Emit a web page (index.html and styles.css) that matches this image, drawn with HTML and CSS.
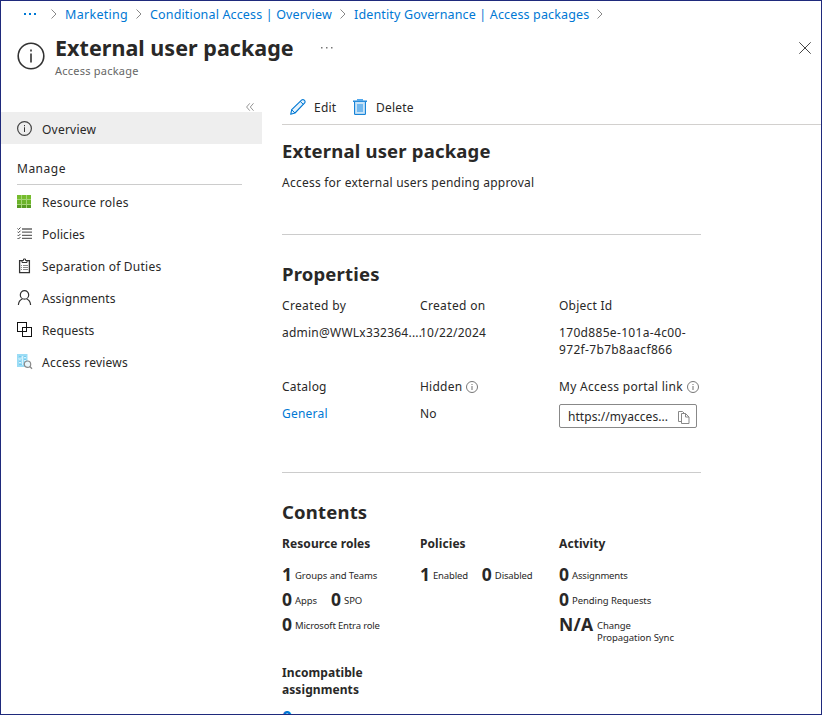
FILE: index.html
```html
<!DOCTYPE html>
<html lang="en">
<head>
<meta charset="utf-8">
<title>External user package</title>
<link rel="stylesheet" href="styles.css">
</head>
<body>
<div class="window">
  <nav class="crumbs">
    <a class="crumb more"><svg width="14" height="4" viewBox="0 0 14 4"><path fill="#0078d4" d="M1 1h2v2H1zM6 1h2v2H6zM11 1h2v2h-2z"/></svg></a>
    <svg class="chev" width="6" height="10" viewBox="0 0 6 10"><path d="M.5.5L5 5 .5 9.500"/></svg>
    <a class="crumb c-marketing">Marketing</a>
    <svg class="chev" width="6" height="10" viewBox="0 0 6 10"><path d="M.5.5L5 5 .5 9.500"/></svg>
    <a class="crumb c-conditional">Conditional Access | Overview</a>
    <svg class="chev" width="6" height="10" viewBox="0 0 6 10"><path d="M.5.5L5 5 .5 9.500"/></svg>
    <a class="crumb c-governance">Identity Governance | Access packages</a>
    <svg class="chev" width="6" height="10" viewBox="0 0 6 10"><path d="M.5.5L5 5 .5 9.500"/></svg>
  </nav>
  <header class="head">
    <svg class="head-icon" width="28" height="28" viewBox="0 0 28 28"><circle cx="14" cy="14" r="12.800" fill="none" stroke="#333" stroke-width="1.600"/><path fill="#333" d="M13.200 7.500h1.600v2h-1.600zM13.200 11.500h1.600v9h-1.600z"/></svg>
    <div class="head-text">
      <div class="title-row"><h1>External user package</h1><svg class="dots" width="12" height="2" viewBox="0 0 12 2"><path fill="#777" d="M0 0h1.500v1.500H0zM5 0h1.500v1.500H5zM10 0h1.500v1.500H10z"/></svg></div>
      <div class="subtitle">Access package</div>
    </div>
    <svg class="close" width="12" height="12" viewBox="0 0 12 12"><path d="M.3.3l11.400 11.400M11.700.3L.3 11.700" stroke="#444" fill="none"/></svg>
  </header>
  <div class="body">
    <aside class="side">
      <div class="collapse"><svg width="8" height="8" viewBox="0 0 8 8"><path d="M3.800.3L.6 4l3.200 3.700M7.500.3L4.300 4l3.200 3.700" fill="none" stroke="#888" stroke-width=".9"/></svg></div>
      <div class="item active"><svg width="16" height="16" viewBox="0 0 16 16"><circle cx="7.500" cy="8.500" r="6.900" fill="none" stroke="#444" stroke-width="1.200"/><path fill="#333" d="M7 5h1v1.200H7zM7 7.300h1V12H7z"/></svg><span class="t-overview">Overview</span></div>
      <div class="group">Manage</div>
      <div class="item"><svg width="16" height="16" viewBox="0 0 16 16"><path fill="#76bc2d" d="M0 1h4v4H0zM5 1h4v4H5zM10 1h4v4h-4z"/><path fill="#6bb32a" d="M0 6h4v4H0zM5 6h4v4H5zM10 6h4v4h-4z"/><path fill="#579a22" d="M0 11h4v3H0zM5 11h4v3H5zM10 11h4v3h-4z"/><path fill="none" stroke="#a5d577" d="M4.500 1v13M9.500 1v13M0 5.500h14M0 10.500h14"/></svg><span class="t-roles">Resource roles</span></div>
      <div class="item"><svg width="16" height="16" viewBox="0 0 16 16"><path fill="none" stroke="#666" stroke-width="1.300" d="M5 3h10M5 6.200h10M5 9.400h10M5 12.400h10"/><path fill="none" stroke="#333" stroke-width=".9" d="M.5 2.500l1 1 2-2M.5 5.700l1 1 2-2M.5 8.900l1 1 2-2M.5 12l1 1 2-2"/></svg><span class="t-policies">Policies</span></div>
      <div class="item"><svg width="16" height="16" viewBox="0 0 16 16"><path fill="none" stroke="#333" stroke-width="1.300" d="M2.600 2.600h9.800v12H2.600z"/><path fill="#fff" stroke="#333" d="M5 4.500v-2h1.500V1h2v1.500H10v2z"/><path stroke="#888" d="M6 7.500h5M6 9.500h5M6 11.500h5M4 7.500h1M4 9.500h1M4 11.500h1"/></svg><span class="t-duties">Separation of Duties</span></div>
      <div class="item"><svg width="16" height="16" viewBox="0 0 16 16"><circle cx="7.500" cy="4.900" r="4.200" fill="none" stroke="#333" stroke-width="1.200"/><path fill="none" stroke="#333" stroke-width="1.200" d="M1.400 15c.2-3.300 2-5.300 4-6M13.600 15c-.2-3.300-2-5.300-4-6"/></svg><span class="t-assign">Assignments</span></div>
      <div class="item"><svg width="16" height="16" viewBox="0 0 16 16" shape-rendering="crispEdges"><path fill="none" stroke="#111" d="M5.500 9.500h-5v-9h9v5M5.500 5.500h9v9h-9zM5.500 9.500h4v-4"/></svg><span class="t-requests">Requests</span></div>
      <div class="item"><svg width="16" height="16" viewBox="0 0 16 16"><path fill="#9bdcf5" d="M0 0h10.500v13H0z"/><path fill="#d8f3fd" d="M5 2h1v9H5zM2 4l1 1 2-2v1L3 6 1 5zM7 3h2v1H7zM2 8h2v1H2zM7 6h2v1H7z"/><path fill="#76cbee" d="M2 2h2v1H2zM7 2h2v1H7zM2 7h2v1H2zM2 10h3v1H2zM7 5h2v1H7z"/><circle cx="10.500" cy="10.200" r="3.200" fill="#e8f6fb" stroke="#8a8a8a" stroke-width="1.200"/><path stroke="#888" stroke-width="1.300" d="M12.800 12.500l2.200 2.300"/></svg><span class="t-reviews">Access reviews</span></div>
    </aside>
    <main class="main">
      <div class="toolbar">
        <svg width="16" height="16" viewBox="0 0 16 16"><path fill="#e6f3fc" stroke="#0078d4" stroke-width="1.100" stroke-linejoin="round" d="M.7 15.300l1-4.600L11.800.9q1.200-.8 2.500.3t.4 2.700L5 14z"/><path fill="none" stroke="#0078d4" d="M10.300 2.500l3.200 3M1.700 10.800L5 14"/></svg>
        <span class="t-edit">Edit</span>
        <svg class="trash" width="14" height="16" viewBox="0 0 14 16"><path fill="#50a8ee" d="M4 0h6v1.500H4z"/><path stroke="#0078d4" stroke-width="1.300" d="M0 2.200h14"/><path fill="#c9e4f8" stroke="#0078d4" d="M1.600 3v12.400h10.800V3"/><path fill="#72b8ee" d="M4 5h6v8H4z"/></svg>
        <span class="t-delete">Delete</span>
      </div>
      <div class="content">
        <section class="intro"><h2 class="h-package">External user package</h2><p>Access for external users pending approval</p></section>
        <section class="props">
          <h2 class="h-props">Properties</h2>
          <div class="grid first">
            <div><div class="label t-by">Created by</div><div class="value t-admin">admin@WWLx332364....</div></div>
            <div><div class="label t-on">Created on</div><div class="value t-date">10/22/2024</div></div>
            <div><div class="label t-oid">Object Id</div><div class="value t-id">170d885e-101a-4c00-<br>972f-7b7b8aacf866</div></div>
          </div>
          <div class="grid second">
            <div><div class="label t-catalog">Catalog</div><div class="value"><a class="t-general">General</a></div></div>
            <div><div class="label"><span class="t-hidden">Hidden</span><svg class="info" width="12" height="12" viewBox="0 0 12 12"><circle cx="6" cy="6" r="5.500" fill="none" stroke="#777"/><path fill="#888" d="M5.400 3h1.200v1H5.400zM5.400 5h1.200v4H5.400z"/></svg></div><div class="value t-no">No</div></div>
            <div><div class="label"><span class="t-portal">My Access portal link</span><svg class="info" width="12" height="12" viewBox="0 0 12 12"><circle cx="6" cy="6" r="5.500" fill="none" stroke="#777"/><path fill="#888" d="M5.400 3h1.200v1H5.400zM5.400 5h1.200v4H5.400z"/></svg></div>
              <div class="linkbox"><span class="t-link">https://myacces...</span><svg width="12" height="13" viewBox="0 0 12 13"><path fill="none" stroke="#888" d="M3.500 10.500h-3V.5h4L7 3M3.500 2.500h4l3.500 3.500v6.500H3.500zM7.500 2.500V6H11"/></svg></div></div>
          </div>
        </section>
        <section class="contents">
          <h2 class="h-contents">Contents</h2>
          <div class="grid">
            <div><h3 class="s-roles">Resource roles</h3>
              <div class="stat"><b>1</b><small class="m-groups">Groups and Teams</small></div>
              <div class="stat"><b>0</b><small class="m-apps">Apps</small><b class="next">0</b><small class="m-spo">SPO</small></div>
              <div class="stat"><b>0</b><small class="m-entra">Microsoft Entra role</small></div>
            </div>
            <div><h3 class="s-policies">Policies</h3>
              <div class="stat"><b>1</b><small class="m-enabled">Enabled</small><b class="next">0</b><small class="m-disabled">Disabled</small></div>
            </div>
            <div><h3 class="s-activity">Activity</h3>
              <div class="stat"><b>0</b><small class="m-assign">Assignments</small></div>
              <div class="stat"><b>0</b><small class="m-pending">Pending Requests</small></div>
              <div class="stat"><b class="na">N/A</b><small class="m-change">Change<br>Propagation Sync</small></div>
            </div>
          </div>
          <h3 class="incompatible">Incompatible<br>assignments</h3>
          <div class="stat last"><b>0</b></div>
        </section>
      </div>
    </main>
  </div>
</div>
</body>
</html>
```
FILE: styles.css
```css
* { box-sizing: border-box; }
body { margin: 0; background: #fff; color: #292827; font: 12px/17px "Noto Sans", "Open Sans", sans-serif; letter-spacing: .23px; }
h1, h2, h3, p { margin: 0; }
svg { flex: none; display: block; }
a { color: #0078d4; }
.window { width: 822px; height: 715px; border: 1px solid #1f2a7c; overflow: hidden; white-space: nowrap; }
.crumbs { display: flex; align-items: center; height: 26px; padding-left: 22px; font-size: 12.500px; letter-spacing: .15px; }
.crumb { flex: none; }
.more { width: 28px; }
.crumbs .chev { margin-right: 8px; }
.chev path { fill: none; stroke: #888; }
.c-marketing { width: 71px; letter-spacing: .3px; }
.c-conditional { width: 190px; }
.c-governance { width: 243px; }
.head { display: flex; height: 65px; padding: 5px 10px 0 16px; }
.head-icon { margin-top: 10px; }
.head-text { flex: 1; margin-left: 10px; }
.title-row { display: flex; align-items: center; height: 30px; }
.dots { margin-top: 2px; }
h1 { width: 266px; padding-top: 1px; font-size: 21.500px; font-weight: 700; line-height: 30px; letter-spacing: .03px; }
.subtitle { font-size: 11px; color: #666; line-height: 17px; }
.close { margin-top: 10px; }
.body { display: flex; height: 622px; }
.side { width: 261px; flex: none; }
.collapse { height: 20px; padding: 11px 0 0 245px; }
.item { display: flex; align-items: center; height: 32px; padding-left: 16px; gap: 9px; }
.active { background: #eee; }
.active svg { margin-top: -1px; }
.active span { padding-top: 2px; }
.t-roles { letter-spacing: .3px; }
.t-policies, .t-assign, .t-requests { letter-spacing: .1px; }
.group { width: 225px; height: 41px; margin: 0 0 1px 16px; padding-top: 16px; border-bottom: 1px solid #ccc; letter-spacing: .5px; }
.main { flex: 1; margin-left: 20px; min-width: 0; }
.toolbar { display: flex; align-items: center; height: 33px; padding: 0 0 2px 8px; border-bottom: 1px solid #d2d0ce; }
.toolbar svg { margin-top: -1px; }
.toolbar span { margin-left: 8px; }
.t-edit { width: 39px; }
.toolbar .t-delete { margin-left: 9px; }
.content { width: 419px; }
h2 { font-size: 18.500px; font-weight: 700; line-height: 24px; letter-spacing: .18px; }
.intro { height: 110px; padding-top: 14px; border-bottom: 1px solid #ccc; }
.intro p { margin-top: 11px; letter-spacing: .24px; }
.props { height: 238px; padding-top: 27px; border-bottom: 1px solid #ccc; }
.grid { display: grid; grid-template-columns: 138px 139px 142px; }
.first { height: 81px; margin-top: 11px; }
.label { display: flex; align-items: center; height: 17px; margin-bottom: 10px; }
.t-by, .t-on { letter-spacing: .35px; }
.t-portal { letter-spacing: .3px; }
.t-id { letter-spacing: .33px; }
.info { margin-left: 4px; }
.linkbox { display: flex; align-items: center; justify-content: space-between; width: 138px; height: 24px; margin-top: -1px; padding: 0 6px 0 8px; border: 1px solid #888; border-radius: 2px; }
.t-link { letter-spacing: .05px; }
.linkbox svg { margin-top: 2px; }
.contents { padding-top: 27px; }
.contents .grid { height: 118px; margin-top: 11px; }
h3 { font-size: 12px; font-weight: 700; line-height: 17px; letter-spacing: .08px; }
.grid h3 { margin-bottom: 10px; }
.stat { display: flex; height: 25px; line-height: 25px; }
.stat b { width: 13px; font-size: 17.500px; font-weight: 700; letter-spacing: 0; }
.stat b.next { margin-left: 14px; }
.stat b.na { width: 38px; letter-spacing: .3px; }
.stat small { font-size: 9.500px; line-height: 12px; padding-top: 8px; letter-spacing: -.07px; }
.stat small.m-entra, .stat small.m-enabled, .stat small.m-disabled, .stat small.m-assign { letter-spacing: -.16px; }
.incompatible { margin-top: 11px; }
.last b { color: #0078d4; }
.last { margin-top: 7px; }
```
